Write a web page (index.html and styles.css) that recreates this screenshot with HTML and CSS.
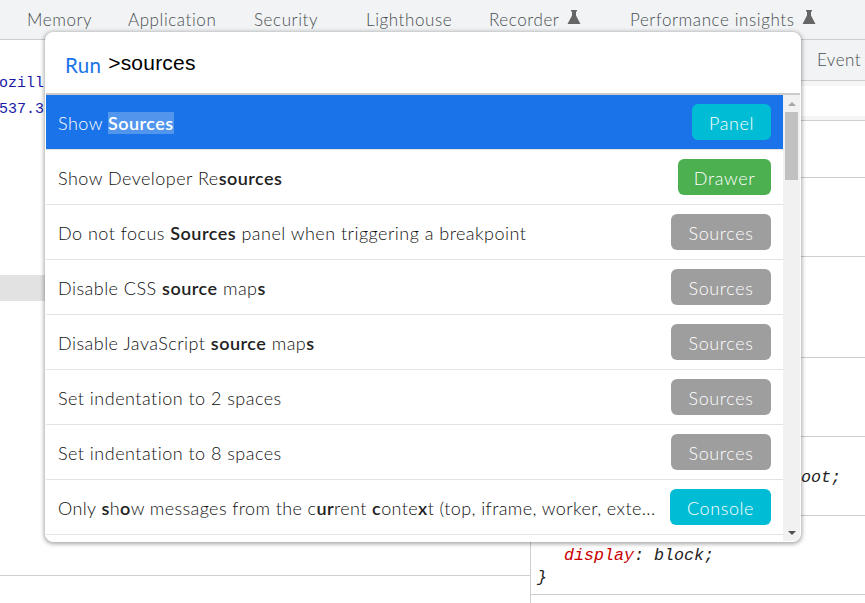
FILE: index.html
```html
<!DOCTYPE html>
<html lang="en">
<head>
<meta charset="utf-8">
<title>Command menu</title>
<link rel="stylesheet" href="styles.css">
</head>
<body>
<div class="devtools">
  <nav class="tabs">
    <span class="tab t-mem">Memory</span>
    <span class="tab t-app">Application</span>
    <span class="tab t-sec">Security</span>
    <span class="tab t-lh">Lighthouse</span>
    <span class="tab t-rec">Recorder<svg class="flask" viewBox="0 0 14 14"><path d="M4 0h6v1.500H9V5.500L13.500 14H.5L5 5.500V1.500H4z"/></svg></span>
    <span class="tab t-perf">Performance insights<svg class="flask" viewBox="0 0 14 14"><path d="M4 0h6v1.500H9V5.500L13.500 14H.5L5 5.500V1.500H4z"/></svg></span>
  </nav>
  <div class="panes">
    <section class="left">
      <div class="code"><div>ozill</div><div>537.3</div></div>
      <div class="selrow"></div>
      <div class="leftrule"></div>
    </section>
    <section class="right">
      <div class="subtabs"><span>Event</span></div>
      <div class="r r1"></div>
      <div class="r r2"></div>
      <div class="r r3"></div>
      <div class="r r4"></div>
      <div class="r r5"></div>
      <div class="r r6"><span class="css css-a">oot;</span></div>
      <div class="r r7"><div class="css css-b"><i class="prop">display</i><span class="colon">:</span> block;</div><div class="css css-c">}</div></div>
    </section>
  </div>
</div>
<div class="palette">
  <div class="prompt"><span class="run">Run</span><span class="query">&gt;sources</span></div>
  <div class="body">
    <ul class="list">
      <li class="item active"><span class="label">Show <b class="hl">Sources</b></span><span class="tag cyan short">Panel</span></li>
      <li class="item"><span class="label">Show Developer Re<b>sources</b></span><span class="tag green">Drawer</span></li>
      <li class="item"><span class="label">Do not focus <b>Sources</b> panel when triggering a breakpoint</span><span class="tag grey">Sources</span></li>
      <li class="item"><span class="label">Disable CSS <b>source</b> map<b>s</b></span><span class="tag grey">Sources</span></li>
      <li class="item"><span class="label">Disable JavaScript <b>source</b> map<b>s</b></span><span class="tag grey">Sources</span></li>
      <li class="item"><span class="label">Set indentation to 2 spaces</span><span class="tag grey">Sources</span></li>
      <li class="item"><span class="label">Set indentation to 8 spaces</span><span class="tag grey">Sources</span></li>
      <li class="item"><span class="label tight">Only <b>s</b>h<b>o</b>w messages from the c<b>ur</b>rent <b>c</b>onte<b>x</b>t (top, iframe, worker, exte...</span><span class="tag cyan">Console</span></li>
      <li class="item tail"></li>
    </ul>
    <div class="scrollbar">
      <svg class="arrow" viewBox="0 0 8 4"><path d="M0 4L4 0l4 4z"/></svg>
      <div class="thumb"></div>
      <div class="spacer"></div>
      <svg class="arrow down" viewBox="0 0 8 4"><path d="M0 0h8L4 4z"/></svg>
    </div>
  </div>
</div>
</body>
</html>
```
FILE: styles.css
```css
* { box-sizing: border-box; }
html, body { margin: 0; height: 100%; overflow: hidden; background: #fff; }
body { width: 865px; height: 603px; position: relative; font-family: "Lato", "Open Sans", sans-serif; font-weight: 300; letter-spacing: .48px; }
.devtools { display: flex; flex-direction: column; height: 603px; }
.tabs { height: 40px; flex: none; background: #f1f3f4; border-bottom: 1px solid #cdcdd2; display: flex; align-items: flex-start; font-size: 17px; letter-spacing: .58px; color: #4a4e52; white-space: nowrap; }
.tab { display: flex; align-items: center; height: 39px; }
.t-mem { margin-left: 27px; width: 101px; }
.t-app { width: 126px; }
.t-sec { width: 112px; }
.t-lh { width: 123px; }
.t-rec { width: 141px; }
.flask { width: 14px; height: 14px; margin: -6px 0 0 8px; fill: #666; }
.panes { flex: 1; display: flex; }
.left { width: 531px; flex: none; border-right: 1px solid #cdcdd2; display: flex; flex-direction: column; }
.code { font-family: "Liberation Mono", monospace; font-weight: 400; font-size: 15px; letter-spacing: 0; line-height: 26px; color: #1a1aa6; padding-top: 31px; margin-left: -1px; height: 235px; }
.selrow { height: 26px; background: #e2e2e2; flex: none; }
.leftrule { margin-top: 274px; border-top: 1px solid #d0d0d0; }
.right { flex: 1; display: flex; flex-direction: column; }
.subtabs { height: 41px; flex: none; background: #f1f3f4; border-bottom: 1px solid #cdcdd2; padding-left: 286px; font-size: 17px; color: #4a4e52; line-height: 40px; white-space: nowrap; }
.r { border-bottom: 1px solid #cdcdd2; flex: none; }
.r1 { height: 40px; background: linear-gradient(#f6f6f6 5px, #fff 5px, #fff 35px, #f5f5f5 35px); }
.r2 { height: 57px; }
.r3 { height: 79px; }
.r4 { height: 101px; }
.r5 { height: 79px; }
.r6 { height: 79px; }
.r7 { height: 79px; }
.css { font-family: "Liberation Mono", monospace; font-style: italic; font-weight: 400; font-size: 16.67px; letter-spacing: 0; color: #222; white-space: nowrap; }
.css-a { display: block; padding: 31px 0 0 270px; line-height: 20px; }
.css-b { padding: 30px 0 0 33px; line-height: 20px; }
.css-c { padding-left: 6px; line-height: 23px; }
.prop { color: #c80000; }
.colon { color: #222; }
.palette { position: absolute; left: 45px; top: 32px; width: 756px; height: 510px; background: #fff; border: 1px solid #fff; border-radius: 8px; box-shadow: 0 1px 4px 1px rgba(0,0,0,.35); overflow: hidden; display: flex; flex-direction: column; }
.prompt { height: 62px; flex: none; border-bottom: 2px solid #cbcbcb; display: flex; align-items: flex-start; }
.run { font-size: 20.5px; color: #1a73e8; font-weight: 400; letter-spacing: .3px; margin: 19px 0 0 19px; line-height: 26px; }
.query { font-family: "Liberation Sans", sans-serif; font-weight: 400; font-size: 21px; letter-spacing: .2px; color: #000; margin: 18px 0 0 7px; line-height: 24px; }
.body { flex: 1; display: flex; min-height: 0; }
.list { list-style: none; margin: 0; padding: 0; flex: 1; min-width: 0; font-size: 18px; color: #111; }
.item { height: 55px; display: flex; align-items: center; justify-content: space-between; padding: 0 12px; border-bottom: 1px solid #e3e3e3; }
.item b { font-weight: 600; color: #222; }
.label { white-space: nowrap; position: relative; top: 1px; }
.tight { letter-spacing: .4px; }
.tail { height: 10px; border: 0; }
.active { background: #1a73e8; color: #fff; }
.active .hl { background: #5295ed; color: #fff; }
.tag { height: 36px; border-radius: 6px; color: #fff; line-height: 38px; text-align: center; font-size: 18px; letter-spacing: .6px; width: 100px; flex: none; margin-left: 12px; }
.cyan { background: #00bcd4; width: 101px; }
.short { width: 79px; }
.green { background: #4caf50; width: 93px; }
.grey { background: #9e9e9e; }
.scrollbar { width: 17px; flex: none; background: #f1f1f1; display: flex; flex-direction: column; align-items: center; padding: 7px 0 6px; }
.arrow { width: 8px; height: 4px; fill: #a3a3a3; flex: none; }
.arrow.down { fill: #505050; }
.thumb { width: 13px; height: 68px; background: #c1c1c1; margin-top: 6px; flex: none; }
.spacer { flex: 1; }
```
